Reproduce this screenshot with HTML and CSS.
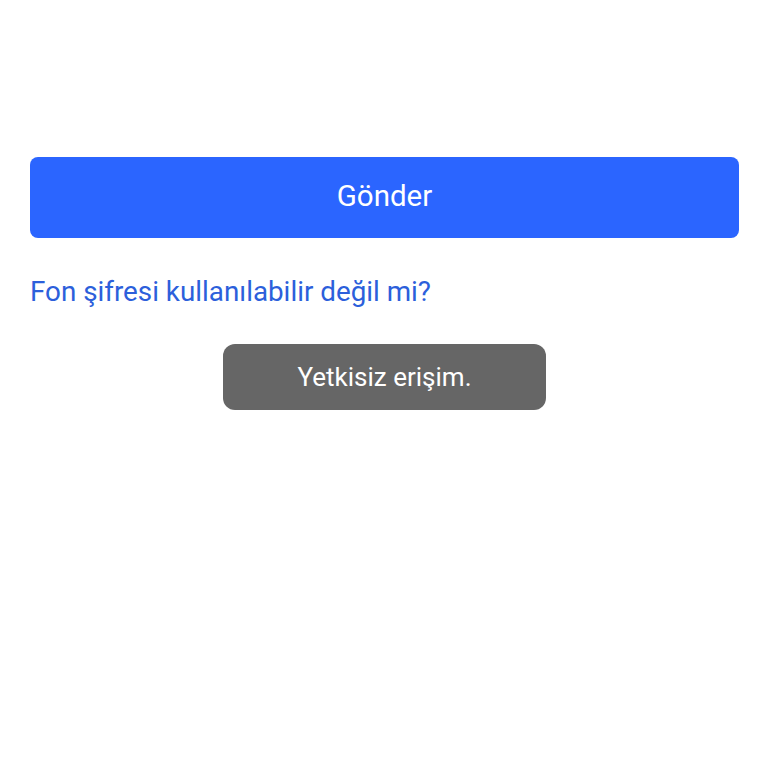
FILE: index.html
```html
<!DOCTYPE html>
<html lang="tr">
<head>
<meta charset="utf-8">
<link rel="stylesheet" href="styles.css">
</head>
<body>
<main class="page">
  <button class="submit">Gönder</button>
  <a class="link" href="#">Fon şifresi kullanılabilir değil mi?</a>
  <div class="toast-row">
    <div class="toast">Yetkisiz erişim.</div>
  </div>
</main>
</body>
</html>
```
FILE: styles.css
```css
html, body {
  margin: 0;
  padding: 0;
  background: #ffffff;
  font-family: Roboto, "Noto Sans", sans-serif;
}
.page {
  display: flex;
  flex-direction: column;
  padding: 157px 29px 0 30px;
}
.submit {
  height: 81px;
  border: none;
  border-radius: 8px;
  background: #2b65ff;
  color: #ffffff;
  font-family: Roboto, sans-serif;
  font-size: 29.5px;
  padding: 0 0 4px 0;
}
.link {
  margin-top: 36px;
  color: #2c5fdb;
  text-decoration: none;
  font-size: 27.8px;
  line-height: 36px;
  align-self: flex-start;
}
.toast-row {
  display: flex;
  justify-content: center;
  margin-top: 34px;
}
.toast {
  width: 323px;
  height: 66px;
  box-sizing: border-box;
  border-radius: 12px;
  background: #666666;
  color: #ffffff;
  font-size: 26px;
  display: flex;
  align-items: center;
  justify-content: center;
}
```
